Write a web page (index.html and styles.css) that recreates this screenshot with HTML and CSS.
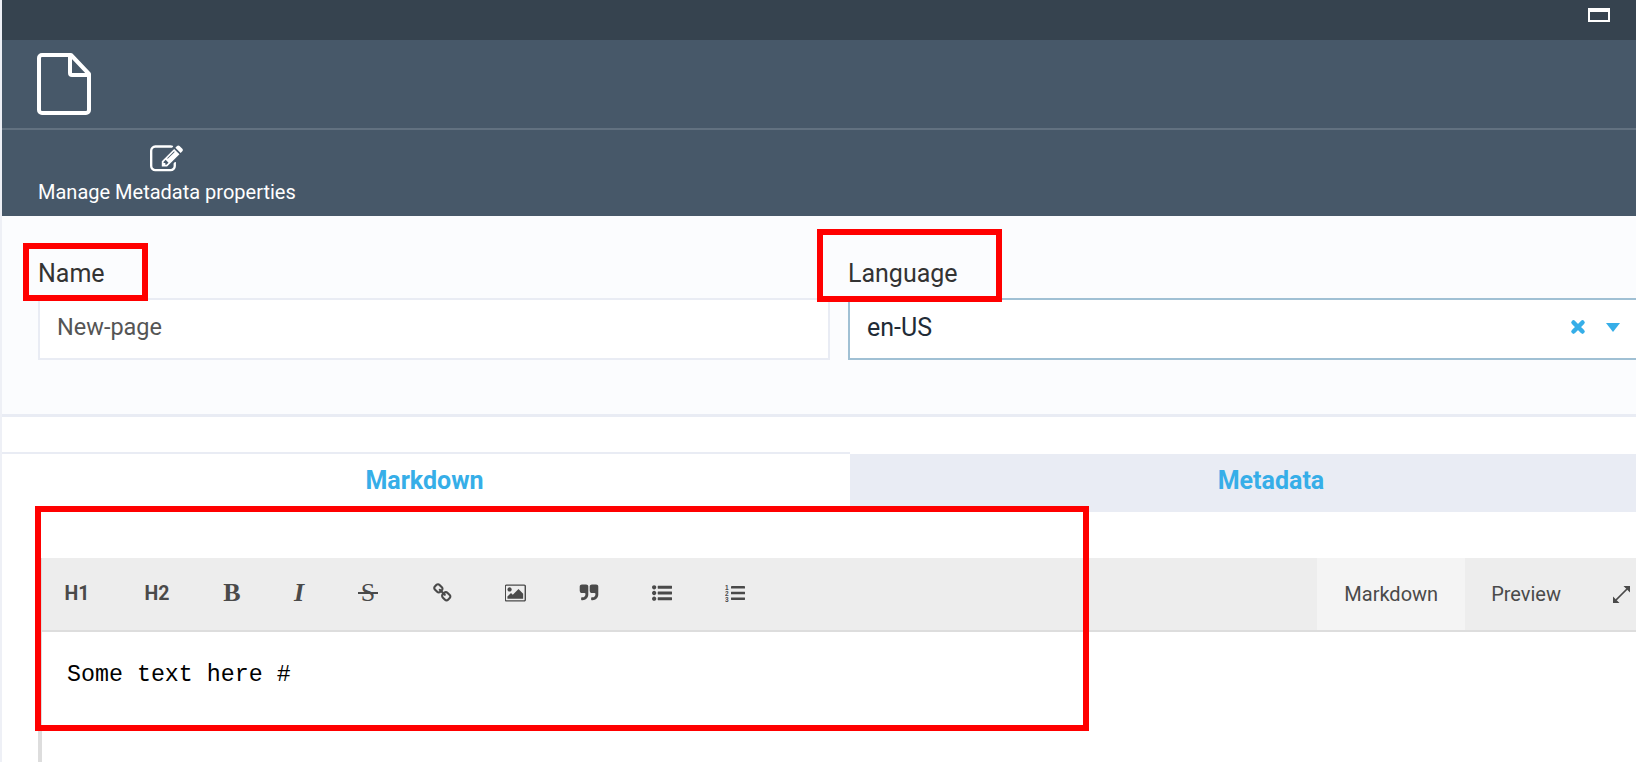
FILE: index.html
```html
<!DOCTYPE html>
<html lang="en"><head>
    <meta charset="UTF-8">
    <meta name="viewport" content="width=device-width, initial-scale=1.0">
    <title>New-page</title>
    <link rel="stylesheet" href="styles.css">
</head>
<body>
    <div class="app">
        <div class="topbar">
            <span class="window-btn"></span>
        </div>
        <header class="header">
            <div class="doc-row">
                <svg class="doc-icon" viewBox="0 0 54 62"><path d="M5 2h29l18 19v36a3 3 0 0 1-3 3H5a3 3 0 0 1-3-3V5a3 3 0 0 1 3-3z" fill="none" stroke="#fff" stroke-width="4" stroke-linejoin="round"/><path d="M33 2v18a2 2 0 0 0 2 2h17" fill="none" stroke="#fff" stroke-width="4"/></svg>
            </div>
            <div class="action-row">
                <button class="action">
                    <svg class="edit-icon" viewBox="0 0 1792 1792"><path fill="#fff" d="M888 1184l116-116-152-152-116 116v56h96v96h56zm440-720q-16-16-33 1l-350 350q-17 17-1 33t33-1l350-350q17-17 1-33zm80 594v190q0 119-84.500 203.500t-203.500 84.500h-832q-119 0-203.500-84.500t-84.500-203.500v-832q0-119 84.500-203.500t203.500-84.500h832q63 0 117 25 15 7 18 23 3 17-9 29l-49 49q-14 14-32 8-23-6-45-6h-832q-66 0-113 47t-47 113v832q0 66 47 113t113 47h832q66 0 113-47t47-113v-126q0-13 9-22l64-64q15-15 35-7t20 29zm-96-738l288 288-672 672h-288v-288zm444 132l-92 92-288-288 92-92q28-28 68-28t68 28l152 152q28 28 28 68t-28 68z"/></svg>
                    <span>Manage Metadata properties</span>
                </button>
            </div>
        </header>

        <section class="form">
            <div class="field">
                <label>Name</label>
                <div class="input">New-page</div>
            </div>
            <div class="field">
                <label>Language</label>
                <div class="input select">
                    <span>en-US</span>
                    <svg class="clear" viewBox="0 0 16 16"><path d="M3.500 3.500l9 9m0-9l-9 9" stroke="#36aee8" stroke-width="4.500" stroke-linecap="round"/></svg>
                    <span class="caret"></span>
                </div>
            </div>
        </section>

        <nav class="tabs">
            <div class="tab active">Markdown</div>
            <div class="tab">Metadata</div>
        </nav>

        <section class="editor">
            <div class="toolbar">
                <span class="tool t-h1">H1</span>
                <span class="tool t-h2">H2</span>
                <span class="tool t-b">B</span>
                <span class="tool t-i">I</span>
                <span class="tool t-s"><span>S</span></span>
                <span class="tool t-link"><svg width="20" height="20" viewBox="0 0 1792 1792"><path d="M1456 1216q0-40-28-68l-208-208q-28-28-68-28-42 0-72 32 3 3 19 18.500t21.500 21.500 15 19 13 25.500 3.500 27.500q0 40-28 68t-68 28q-15 0-27.500-3.500t-25.500-13-19-15-21.500-21.500-18.500-19q-33 31-33 73 0 40 28 68l206 207q27 27 68 27 40 0 68-26l147-146q28-28 28-67zm-703-705q0-40-28-68l-206-207q-28-28-68-28-39 0-68 27l-147 146q-28 28-28 67 0 40 28 68l208 208q27 27 68 27 42 0 72-31-3-3-19-18.500t-21.500-21.500-15-19-13-25.500-3.500-27.500q0-40 28-68t68-28q15 0 27.500 3.500t25.500 13 19 15 21.500 21.500 18.500 19q33-31 33-73zm895 705q0 120-85 203l-147 146q-83 83-203 83-121 0-204-85l-206-207q-83-83-83-203 0-123 88-209l-88-88q-86 88-208 88-120 0-204-84l-208-208q-84-84-84-204t85-203l147-146q83-83 203-83 121 0 204 85l206 207q83 83 83 203 0 123-88 209l88 88q86-88 208-88 120 0 204 84l208 208q84 84 84 204z"/></svg></span>
                <span class="tool t-img"><svg width="22" height="20" viewBox="0 0 1920 1792"><path d="M576 576q0 80-56 136t-136 56-136-56-56-136 56-136 136-56 136 56 56 136zm1024 384v448h-1408v-192l320-320 160 160 512-512zm96-704h-1600q-13 0-22.500 9.500t-9.500 22.500v1216q0 13 9.500 22.500t22.500 9.500h1600q13 0 22.500-9.500t9.500-22.500v-1216q0-13-9.500-22.500t-22.500-9.500zm160 32v1216q0 66-47 113t-113 47h-1600q-66 0-113-47t-47-113v-1216q0-66 47-113t113-47h1600q66 0 113 47t47 113z"/></svg></span>
                <span class="tool t-quote"><svg width="20" height="20" viewBox="0 0 1792 1792"><path d="M832 320v704q0 104-40.500 198.500t-109.500 163.500-163.500 109.500-198.500 40.500h-64q-26 0-45-19t-19-45v-128q0-26 19-45t45-19h64q106 0 181-75t75-181v-32q0-40-28-68t-68-28h-224q-80 0-136-56t-56-136v-384q0-80 56-136t136-56h384q80 0 136 56t56 136zm896 0v704q0 104-40.500 198.500t-109.500 163.500-163.500 109.500-198.500 40.500h-64q-26 0-45-19t-19-45v-128q0-26 19-45t45-19h64q106 0 181-75t75-181v-32q0-40-28-68t-68-28h-224q-80 0-136-56t-56-136v-384q0-80 56-136t136-56h384q80 0 136 56t56 136z"/></svg></span>
                <span class="tool t-ul"><svg width="20" height="20" viewBox="0 0 1792 1792"><path d="M384 1408q0 80-56 136t-136 56-136-56-56-136 56-136 136-56 136 56 56 136zm0-512q0 80-56 136t-136 56-136-56-56-136 56-136 136-56 136 56 56 136zm1408 416v192q0 13-9.500 22.500t-22.500 9.500h-1216q-13 0-22.500-9.500t-9.500-22.500v-192q0-13 9.500-22.500t22.500-9.500h1216q13 0 22.500 9.500t9.500 22.500zm-1408-928q0 80-56 136t-136 56-136-56-56-136 56-136 136-56 136 56 56 136zm1408 416v192q0 13-9.500 22.500t-22.500 9.500h-1216q-13 0-22.500-9.500t-9.500-22.500v-192q0-13 9.500-22.500t22.500-9.500h1216q13 0 22.500 9.500t9.500 22.500zm0-512v192q0 13-9.500 22.500t-22.500 9.500h-1216q-13 0-22.500-9.500t-9.500-22.500v-192q0-13 9.500-22.500t22.500-9.500h1216q13 0 22.500 9.500t9.500 22.500z"/></svg></span>
                <span class="tool t-ol"><svg width="20" height="20" viewBox="0 0 20 20"><text x="0" y="6.500" class="ol-num">1</text><text x="0" y="12.500" class="ol-num">2</text><text x="0" y="18.500" class="ol-num">3</text><rect x="6" y="3" width="14" height="2.600" rx=".4"/><rect x="6" y="8.700" width="14" height="2.600" rx=".4"/><rect x="6" y="14.400" width="14" height="2.600" rx=".4"/></svg></span>
                <div class="toolbar-right">
                    <span class="mode on">Markdown</span>
                    <span class="mode">Preview</span>
                    <span class="expand"><svg width="19" height="19" viewBox="0 0 19 19"><path d="M11.500 1H18v6.500zM7.500 18H1v-6.500z"/><path d="M15 4L4 15" stroke="#4a4a4a" stroke-width="1.700"/></svg></span>
                </div>
            </div>
            <div class="code">Some text here #</div>
        </section>

        <div class="mark mark-name"></div>
        <div class="mark mark-lang"></div>
        <div class="mark mark-editor"></div>
    </div>
</body>
</html>
```

FILE: styles.css
```css
html, body {
    margin: 0;
    height: 100%;
    overflow: hidden;
    background: #fff;
}
body {
    font-family: Roboto, "Liberation Sans", sans-serif;
}
.app {
    position: relative;
    height: 762px;
    border-left: 2px solid #eef0f6;
    overflow: hidden;
}
.topbar {
    height: 40px;
    background: #36434f;
    display: flex;
    justify-content: flex-end;
    align-items: flex-start;
}
.window-btn {
    width: 22px;
    height: 14px;
    margin: 8px 26px 0 0;
    border: 2px solid #fff;
    border-top-width: 4px;
    box-sizing: border-box;
}
.header {
    height: 176px;
    background: #475869;
    color: #fff;
}
.doc-row {
    height: 90px;
    padding: 13px 0 0 35px;
    box-sizing: border-box;
    border-bottom: 2px solid #627180;
}
.doc-icon {
    display: block;
    width: 54px;
    height: 62px;
}
.action-row {
    padding: 13px 0 0 36px;
}
.action {
    display: flex;
    flex-direction: column;
    align-items: center;
    gap: 4px;
    padding: 0;
    background: none;
    border: none;
    color: #fff;
    font: 20px Roboto, sans-serif;
}
.edit-icon {
    width: 33px;
    height: 33px;
}
.form {
    height: 201px;
    box-sizing: border-box;
    background: #fbfcfe;
    border-bottom: 3px solid #e9ecf4;
    padding: 42px 0 0 36px;
    display: grid;
    grid-template-columns: 792px 1fr;
    column-gap: 18px;
    align-items: start;
}
.field label {
    display: block;
    font-size: 25px;
    line-height: 32px;
    margin-bottom: 8px;
    color: #333;
}
.input {
    height: 62px;
    box-sizing: border-box;
    border: 2px solid #e9ecf4;
    background: #fff;
    padding: 0 17px 4px;
    font-size: 23.500px;
    color: #555;
    display: flex;
    align-items: center;
}
.select {
    margin-right: -6px;
    padding-right: 18px;
    border-color: #a0c0d4;
    color: #212b36;
    font-size: 25px;
}
.select span:first-child {
    flex: 1;
}
.clear {
    width: 16px;
    height: 16px;
    margin-right: 20px;
}
.caret {
    width: 0;
    height: 0;
    border: 7px solid transparent;
    border-top: 9px solid #36aee8;
    border-bottom: 0;
    margin-right: 2px;
}
.tabs {
    display: flex;
    margin-top: 35px;
    height: 60px;
}
.tab {
    flex: none;
    width: 842px;
    background: #e9ecf4;
    margin-top: 2px;
    text-align: center;
    font-size: 25px;
    font-weight: bold;
    line-height: 53px;
    color: #36aee8;
}
.tab.active {
    width: 845px;
    padding-right: 3px;
    margin-top: 0;
    background: #fff;
    border-top: 2px solid #e9ecf4;
}
.editor {
    margin: 46px 0 0 36px;
    border-left: 4px solid #ddd;
    height: 300px;
}
.toolbar {
    height: 74px;
    box-sizing: border-box;
    background: #ededed;
    border-bottom: 2px solid #ddd;
    display: flex;
    align-items: center;
    color: #4a4a4a;
}
.toolbar svg {
    display: block;
    fill: #4a4a4a;
}
.tool {
    display: flex;
    justify-content: center;
    align-items: center;
    box-sizing: border-box;
    width: 74px;
    height: 72px;
    padding-bottom: 2px;
    flex: none;
}
.t-h1, .t-h2 {
    font-size: 19.500px;
    font-weight: bold;
}
.t-h1 { margin-left: -2px; }
.t-h2 { width: 86px; }
.t-b, .t-i, .t-s {
    font-family: "Liberation Serif", serif;
    font-size: 26px;
}
.t-b { font-weight: bold; width: 64px; }
.t-i { font-style: italic; font-weight: bold; width: 70px; }
.t-s { width: 68px; }
.t-s span {
    padding: 0 3px;
    background: linear-gradient(#4a4a4a, #4a4a4a) center / 100% 2px no-repeat;
}
.t-link { margin-left: 5px; width: 72px; }
.t-img { width: 73px; }
.t-quote { width: 73px; }
.t-ol { margin-left: -1px; }
.ol-num {
    font: bold 6.500px "Liberation Sans", sans-serif;
}
.toolbar-right {
    margin-left: auto;
    display: flex;
    align-items: center;
    height: 72px;
    font-size: 20px;
}
.mode {
    height: 72px;
    line-height: 72px;
    padding: 0 26px;
}
.mode.on {
    background: #f4f4f4;
    padding: 0 27px;
}
.expand {
    padding: 0 5px 0 25px;
}
.code {
    padding: 28px 25px;
    font: 23.300px/30px "Liberation Mono", monospace;
    color: #000;
}
/* red annotation boxes drawn over the screenshot */
.mark {
    position: absolute;
    box-sizing: border-box;
    border: 6px solid #f00;
}
.mark-name { left: 21px; top: 243px; width: 125px; height: 58px; }
.mark-lang { left: 815px; top: 229px; width: 185px; height: 73px; }
.mark-editor { left: 33px; top: 506px; width: 1054px; height: 225px; }
```
